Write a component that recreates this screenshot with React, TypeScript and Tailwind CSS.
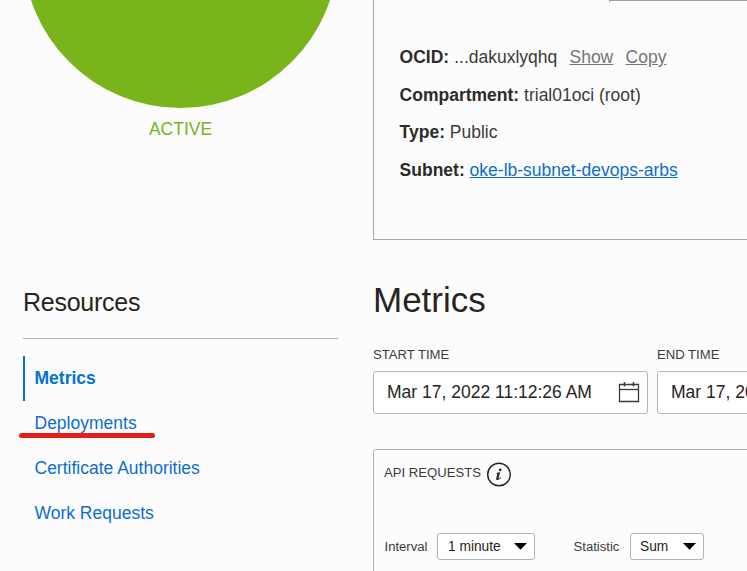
import React from "react";

const details = [
  { label: "Compartment:", value: "trial01oci (root)" },
  { label: "Type:", value: "Public" },
];

const resources = ["Deployments", "Certificate Authorities", "Work Requests"];

function CalendarIcon() {
  return (
    <svg width="22" height="21" viewBox="0 0 22 21" fill="none" stroke="#3c3a38" className="shrink-0">
      <path d="M1.5 2.5H20.5V19.5H1.5Z" strokeWidth="1.3" />
      <path d="M1 7.5H21" strokeWidth="1.3" />
      <path d="M6.5 0V4.5M15.5 0V4.5" strokeWidth="1.5" />
    </svg>
  );
}

function InfoIcon() {
  return (
    <svg width="26" height="26" viewBox="0 0 26 26" className="shrink-0">
      <circle cx="13" cy="13.5" r="11.3" fill="none" stroke="#262422" strokeWidth="1.5" />
      <circle cx="14.2" cy="8.8" r="1.4" fill="#262422" />
      <path
        d="M10.2 12.4C11.3 11.8 12.6 11.4 14.2 11.3L12.6 17.1C12.4 17.9 12.7 17.9 13.2 17.5L14.8 16L15.3 16.5C14.1 18.1 12.9 19 11.5 19C10.2 19 9.9 18.2 10.3 16.9L11.3 13.1C11.4 12.7 11.2 12.8 10.2 13Z"
        fill="#262422"
      />
    </svg>
  );
}

function DateField({ label, value }: { label: string; value: string }) {
  return (
    <div className="w-[275px] shrink-0">
      <div className="h-[26px] text-[13.125px] leading-[20px] text-[#3c3a38]">{label}</div>
      <div className="flex h-[43px] items-center justify-between rounded-[3px] border border-[#aeb4c0] bg-white pr-[7px] pl-[13px] text-[17.5px] text-[#262422]">
        <span className="whitespace-nowrap">{value}</span>
        <CalendarIcon />
      </div>
    </div>
  );
}

function Select({ value, className }: { value: string; className: string }) {
  return (
    <div
      className={`flex h-[27px] shrink-0 items-center justify-between rounded-[3px] border border-[#aeb4c0] bg-white pr-[7px] text-[13.75px] text-[#262422] ${className}`}
    >
      <span className="pt-[2px]">{value}</span>
      <svg width="13" height="7" viewBox="0 0 13 7">
        <path d="M0 0H13L6.5 6.8Z" fill="#000" />
      </svg>
    </div>
  );
}

export default function App() {
  return (
    <div className="flex h-[571px] w-[747px] flex-col overflow-hidden bg-[#fcfcfc] font-['Liberation_Sans',Arial,sans-serif] text-[17.5px] text-[#3c3a38]">
      <div className="flex h-[240px] shrink-0 gap-[35px] pl-[23px]">
        <div className="flex w-[315px] shrink-0 flex-col items-center">
          <div className="-mt-[207px] size-[315px] shrink-0 rounded-full bg-[#78b41a]" />
          <div className="mt-[9px] leading-6 text-[#78b41a]">ACTIVE</div>
        </div>
        <div className="w-[400px] shrink-0 border-b border-l border-[#a8a8a8]">
          <div className="ml-[235px] h-[2px] border-t border-l border-[#a0a0a0]" />
          <div className="flex flex-col gap-[13.6px] pt-[43px] pl-[25.6px] leading-6">
            <div className="flex">
              <b className="mr-[5px] text-[#2d2b29]">OCID:</b>
              <span>...dakuxlyqhq</span>
              <span className="ml-[12.2px] text-[#757575] underline">Show</span>
              <span className="ml-[12.3px] text-[#757575] underline">Copy</span>
            </div>
            {details.map((d) => (
              <div key={d.label}>
                <b className="text-[#2d2b29]">{d.label}</b> {d.value}
              </div>
            ))}
            <div>
              <b className="text-[#2d2b29]">Subnet:</b>{" "}
              <span className="text-[#0e6dcd] underline">oke-lb-subnet-devops-arbs</span>
            </div>
          </div>
        </div>
      </div>

      <div className="flex gap-[35px] pl-[23px]">
        <div className="w-[315px] shrink-0 pt-[46px]">
          <h2 className="h-[53px] border-b border-[#aeb4c0] text-[25px] leading-[32px] tracking-[-0.25px] text-[#262422]">Resources</h2>
          <ul className="mt-[17px] text-[#0e6dcd]">
            <li className="h-[45px] border-l-2 border-[#0572ce] pl-[9.5px] leading-[44px] font-bold text-[#0572ce]">Metrics</li>
            {resources.map((r) => (
              <li key={r} className="relative h-[45px] pl-[11.5px] leading-[44px]">
                {r}
                {r === "Deployments" && (
                  <span className="absolute top-[32px] -left-[4.5px] h-[5px] w-[136px] rounded-full bg-[#e81c1c]" />
                )}
              </li>
            ))}
          </ul>
        </div>

        <div className="w-[560px] shrink-0">
          <h1 className="pt-[38px] text-[35px] leading-[44px] text-[#262422]">Metrics</h1>
          <div className="mt-[23px] flex gap-[9px]">
            <DateField label="START TIME" value="Mar 17, 2022 11:12:26 AM" />
            <DateField label="END TIME" value="Mar 17, 2022 11:12:26 PM" />
          </div>
          <div className="mt-[35px] h-[140px] rounded-[3px] border border-[#aeb4c0] px-[10px] pt-[11px] text-[13.125px]">
            <div className="flex h-[26px] gap-[5px]">
              <span className="leading-[24px]">API REQUESTS</span>
              <InfoIcon />
            </div>
            <div className="mt-[46px] flex items-center">
              <span className="w-[53px] pl-[0.5px]">Interval</span>
              <Select value="1 minute" className="w-[98px] pl-[10px]" />
              <span className="ml-[38.5px] w-[56.5px]">Statistic</span>
              <Select value="Sum" className="w-[74px] pl-[9px]" />
            </div>
          </div>
        </div>
      </div>
    </div>
  );
}
